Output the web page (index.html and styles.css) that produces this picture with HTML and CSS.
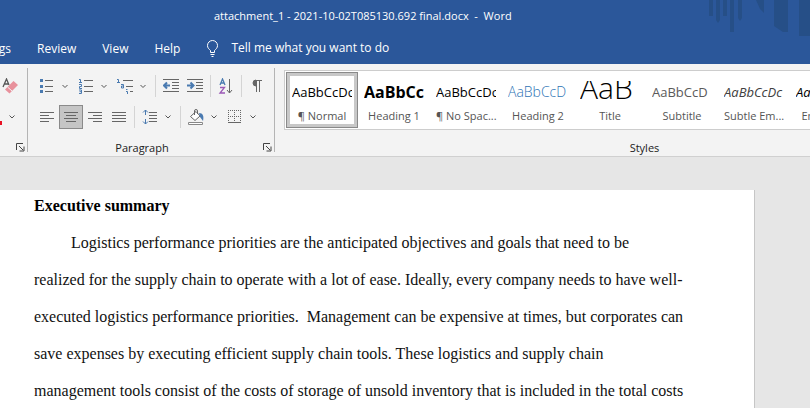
FILE: index.html
```html
<!DOCTYPE html>
<html lang="en">
<head>
    <meta charset="UTF-8">
    <meta name="viewport" content="width=device-width, initial-scale=1.0">
    <title>attachment_1 - Word</title>
    <link rel="stylesheet" href="styles.css">
</head>
<body>
    <header class="header">
        <svg class="header-art" width="102" height="37" viewBox="0 0 102 37" aria-hidden="true">
            <path d="M1 0h4v16h-4zM8 0h4v20l-2 3l-2-3zM15 0h4v16h-4zM22 0h4v32h-4zM30 0h4v18l-2 3l-2-3zM48 0h8v13l-4-4zM66 0h14v32h-5l-9-6zM91 0h11v36h-11z"/>
        </svg>
        <div class="title">attachment_1 - 2021-10-02T085130.692 final.docx&nbsp; -&nbsp; Word</div>
        <nav class="tabs">
            <a href="#" class="cut">Mailings</a>
            <a href="#">Review</a>
            <a href="#">View</a>
            <a href="#">Help</a>
            <a href="#" class="tell">
                <svg width="13" height="17" viewBox="0 0 13 17" aria-hidden="true">
                    <path d="M4.5 12.5v-2C3 9 1.5 8 1.5 5.5a5 5 0 0 1 10 0C11.5 8 10 9 8.500 10.500v2zM4.500 14.500h4M5.500 16.500h2" fill="none" stroke="#fff"/>
                </svg>
                Tell me what you want to do
            </a>
        </nav>
    </header>

    <div class="ribbon">
        <section class="group font-group" aria-label="Font">
            <div class="row">
                <button class="tool" aria-label="Clear formatting">
                    <svg width="16" height="16" viewBox="0 0 16 16">
                        <path d="M1 9L4.500 1L7 7M2.500 6h4" fill="none" stroke="#555" stroke-width="1.300"/>
                        <path d="M3 11.500L11.500 3L16 7L7.500 15.500z" fill="#e8919c"/>
                        <path d="M5.500 9l4.500 4" stroke="#f3f3f3"/>
                    </svg>
                </button>
            </div>
            <div class="row">
                <span class="font-color"></span>
                <button class="tool arrow" aria-label="Font color">
                    <svg width="8" height="8" viewBox="0 0 8 8"><path class="chev" d="M1.500 2.500L4 5L6.500 2.500"/></svg>
                </button>
            </div>
            <div class="label-row">
                <button class="launcher" aria-label="Font settings">
                    <svg width="9" height="9" viewBox="0 0 9 9"><path d="M.5 7V.5H7M3 3L7 7M8 3.500V8H3.500"/></svg>
                </button>
            </div>
        </section>

        <section class="group paragraph-group" aria-label="Paragraph">
            <div class="row">
                <button class="split" aria-label="Bullets">
                    <svg width="16" height="16" viewBox="0 0 16 16">
                        <path class="line" d="M6 2.500h8M6 8.500h8M6 13.500h8"/>
                        <path d="M1 1h3v3H1zM1 7h3v3H1zM1 12h3v3H1z" fill="#4a7ab0"/>
                    </svg>
                    <svg width="8" height="8" viewBox="0 0 8 8"><path class="chev" d="M1.500 3L4 5.500L6.500 3"/></svg>
                </button>
                <button class="split" aria-label="Numbering">
                    <svg width="16" height="16" viewBox="0 0 16 16">
                        <path class="line" d="M6 2.500h9M6 8.500h9M6 13.500h9"/>
                        <path class="blue" d="M1 1.500h1.500v3M1 4.500h3M1 6.500h2.500v2H1.500v2H4M1 12h2.500v3.500H1M1.500 13.700h2"/>
                    </svg>
                    <svg width="8" height="8" viewBox="0 0 8 8"><path class="chev" d="M1.500 3L4 5.500L6.500 3"/></svg>
                </button>
                <button class="split" aria-label="Multilevel list">
                    <svg width="16" height="16" viewBox="0 0 16 16">
                        <path class="line" d="M6 2.500h10M9 8.500h7M13 13.500h3"/>
                        <path class="blue" d="M0 1.500h1.500v3M0 4.500h3M4 6.500h2.500v3.500H4.500v-2h2M9 11.500h1.500M9 13.500h1.500v3"/>
                    </svg>
                    <svg width="8" height="8" viewBox="0 0 8 8"><path class="chev" d="M1.500 3L4 5.500L6.500 3"/></svg>
                </button>
                <span class="sep"></span>
                <button class="tool" aria-label="Decrease indent">
                    <svg width="16" height="16" viewBox="0 0 16 16">
                        <path class="line" d="M0 1.500h16M9 4.500h7M9 7.500h7M9 10.500h7M0 13.500h16"/>
                        <path class="arrow-blue" d="M7 7.500H1M4 4.500L1 7.500l3 3"/>
                    </svg>
                </button>
                <button class="tool" aria-label="Increase indent">
                    <svg width="16" height="16" viewBox="0 0 16 16">
                        <path class="line" d="M0 1.500h16M9 4.500h7M9 7.500h7M9 10.500h7M0 13.500h16"/>
                        <path class="arrow-blue" d="M0 7.500h6M3.500 4.500l3 3l-3 3"/>
                    </svg>
                </button>
                <span class="sep"></span>
                <button class="tool" aria-label="Sort">
                    <svg width="16" height="16" viewBox="0 0 16 16">
                        <path d="M2 7L4.500 1L7 7M3 5h3" fill="none" stroke="#4a7ab0" stroke-width="1.300"/>
                        <path d="M2 9.500h4.500L2 15h5" fill="none" stroke="#9b59b6" stroke-width="1.300"/>
                        <path class="line" d="M11.500 1v14M9 12l2.500 3l2.500-3"/>
                    </svg>
                </button>
                <span class="sep"></span>
                <button class="tool" aria-label="Show formatting marks">
                    <svg width="16" height="16" viewBox="0 0 16 16">
                        <path d="M7 2v6a3 3 0 0 1 0-6z" fill="#666" stroke="#666"/>
                        <path class="line" d="M6 2.500h7M7.500 2v12M10.500 2v12"/>
                    </svg>
                </button>
            </div>
            <div class="row">
                <button class="tool" aria-label="Align left">
                    <svg width="16" height="16" viewBox="0 0 16 16"><path class="line" d="M1 3.500h14M1 6.500h9M1 9.500h14M1 12.500h9"/></svg>
                </button>
                <button class="tool pressed" aria-label="Center" aria-pressed="true">
                    <svg width="16" height="16" viewBox="0 0 16 16"><path class="line" d="M1 3.500h14M3 6.500h10M1 9.500h14M3 12.500h10"/></svg>
                </button>
                <button class="tool" aria-label="Align right">
                    <svg width="16" height="16" viewBox="0 0 16 16"><path class="line" d="M1 3.500h14M6 6.500h9M1 9.500h14M6 12.500h9"/></svg>
                </button>
                <button class="tool" aria-label="Justify">
                    <svg width="16" height="16" viewBox="0 0 16 16"><path class="line" d="M1 3.500h14M1 6.500h14M1 9.500h14M1 12.500h14"/></svg>
                </button>
                <span class="sep"></span>
                <button class="split" aria-label="Line spacing">
                    <svg width="16" height="16" viewBox="0 0 16 16">
                        <path class="line" d="M7 3.500h8M7 6.500h8M7 9.500h8M7 12.500h8"/>
                        <path class="arrow-blue thin" d="M3.500 1v5M1 3.500L3.500 1L6 3.500M3.500 10v5M1 12.500L3.500 15L6 12.500"/>
                    </svg>
                    <svg width="8" height="8" viewBox="0 0 8 8"><path class="chev" d="M1.500 2.500L4 5L6.500 2.500"/></svg>
                </button>
                <span class="sep"></span>
                <button class="split" aria-label="Shading">
                    <svg width="16" height="16" viewBox="0 0 16 16">
                        <path d="M2.500 7.500L8 2.500L12 7L7 11.500z" fill="#fff" stroke="#666"/>
                        <path d="M6.500 6V2a1.500 1.500 0 0 1 3 0v3" fill="none" stroke="#666"/>
                        <path d="M11 4c4 0 5 3 4 8l-3-4z" fill="#4a7ab0"/>
                        <path d="M.5 13.500h14v2H.5z" fill="#fff" stroke="#888"/>
                    </svg>
                    <svg width="8" height="8" viewBox="0 0 8 8"><path class="chev" d="M1.500 2.500L4 5L6.500 2.500"/></svg>
                </button>
                <button class="split" aria-label="Borders">
                    <svg width="16" height="16" viewBox="0 0 16 16">
                        <path d="M1 1.500h13M1 7.500h13M1.500 1v12M7.500 1v12M13.500 1v12" fill="none" stroke="#666" stroke-dasharray="1 1"/>
                        <path class="line" d="M1 13.500h13"/>
                    </svg>
                    <svg width="8" height="8" viewBox="0 0 8 8"><path class="chev" d="M1.500 2.500L4 5L6.500 2.500"/></svg>
                </button>
            </div>
            <div class="label-row">
                <span>Paragraph</span>
                <button class="launcher" aria-label="Paragraph settings">
                    <svg width="9" height="9" viewBox="0 0 9 9"><path d="M.5 7V.5H7M3 3L7 7M8 3.500V8H3.500"/></svg>
                </button>
            </div>
        </section>

        <section class="group styles-group" aria-label="Styles">
            <div class="gallery">
                <button class="style selected"><span class="preview">AaBbCcDc</span><span class="name">¶ Normal</span></button>
                <button class="style"><span class="preview heading1">AaBbCc</span><span class="name">Heading 1</span></button>
                <button class="style"><span class="preview">AaBbCcDc</span><span class="name">¶ No Spac...</span></button>
                <button class="style"><span class="preview heading2">AaBbCcD</span><span class="name">Heading 2</span></button>
                <button class="style"><span class="preview big">AaB</span><span class="name">Title</span></button>
                <button class="style"><span class="preview subtitle">AaBbCcD</span><span class="name">Subtitle</span></button>
                <button class="style"><span class="preview subtle">AaBbCcDc</span><span class="name">Subtle Em...</span></button>
                <button class="style"><span class="preview emphasis">AaBbCcDc</span><span class="name">Emphasis</span></button>
            </div>
            <div class="label-row"><span>Styles</span></div>
        </section>
    </div>

    <main class="workspace">
        <article class="page">
            <h1>Executive summary</h1>
            <p>
                Logistics performance priorities are the anticipated objectives and goals that need to be<br>
                realized for the supply chain to operate with a lot of ease. Ideally, every company needs to have well-<br>
                executed logistics performance priorities.&nbsp; Management can be expensive at times, but corporates can<br>
                save expenses by executing efficient supply chain tools. These logistics and supply chain<br>
                management tools consist of the costs of storage of unsold inventory that is included in the total costs
            </p>
        </article>
    </main>
</body>
</html>
```
FILE: styles.css
```css
* {
    box-sizing: border-box;
}

body {
    margin: 0;
    min-height: 100vh;
    display: flex;
    flex-direction: column;
    overflow: hidden;
    background: #E6E6E6;
    font-family: "Open Sans", "Noto Sans", sans-serif;
    font-size: 11px;
    color: #222;
}

button {
    margin: 0;
    padding: 0;
    border: 0;
    background: none;
    font-family: inherit;
    font-size: 11px;
}

svg {
    display: block;
    flex: none;
}

/* title bar and tabs */
.header {
    position: relative;
    background: #2B579A;
    color: #FFF;
}

.header-art {
    position: absolute;
    top: 0;
    right: 0;
    fill: #264F87;
}

.title {
    padding-left: 214px;
    line-height: 32px;
    white-space: nowrap;
}

.tabs {
    display: flex;
    gap: 26px;
    height: 32px;
    line-height: 34px;
    font-size: 12px;
}

.tabs a {
    color: #FFF;
    text-decoration: none;
    white-space: nowrap;
}

.tabs .cut {
    display: flex;
    justify-content: flex-end;
    width: 11px;
    overflow: hidden;
}

.tabs .tell {
    display: flex;
    align-items: center;
    gap: 12px;
}

/* ribbon */
.ribbon {
    display: flex;
    overflow: hidden;
    padding: 4px 0;
    background: #F3F3F3;
    border-bottom: 1px solid #D0D0D0;
}

.group {
    flex: none;
    display: flex;
    flex-direction: column;
    padding-top: 6px;
    border-right: 1px solid #B4B4B4;
}

.font-group {
    width: 28px;
}

.paragraph-group {
    width: 247px;
}

.styles-group {
    width: 740px;
}

.row {
    display: flex;
    align-items: center;
    height: 24px;
    margin-bottom: 7px;
}

.paragraph-group .row {
    padding-left: 7px;
}

.tool {
    display: flex;
    align-items: center;
    justify-content: center;
    width: 24px;
    height: 24px;
}

.font-group .row .tool {
    width: 20px;
}

.pressed {
    background: #C5C5C5;
    border: 1px solid #8A8A8A;
}

.split {
    display: flex;
    align-items: center;
    gap: 6px;
    width: 39px;
    height: 24px;
    padding-left: 4px;
}

.sep {
    width: 1px;
    height: 22px;
    margin: 0 3px;
    background: #D4D4D4;
}

.font-color {
    width: 2px;
    height: 4px;
    margin-top: 12px;
    background: #E81123;
}

.line {
    fill: none;
    stroke: #666;
}

.blue {
    fill: none;
    stroke: #4A7AB0;
}

.arrow-blue {
    fill: none;
    stroke: #4A7AB0;
    stroke-width: 2;
}

.thin {
    stroke-width: 1;
}

.chev {
    fill: none;
    stroke: #555;
}

.label-row {
    position: relative;
    display: flex;
    align-items: flex-end;
    justify-content: center;
    height: 16px;
    line-height: 8px;
}

.paragraph-group .label-row {
    padding-right: 18px;
}

.launcher {
    position: absolute;
    right: 2px;
    bottom: 0;
}

.launcher path {
    fill: none;
    stroke: #444;
}

/* styles gallery */
.gallery {
    display: flex;
    height: 60px;
    margin: -4px 9px 6px;
    padding: 1px;
    background: #FFF;
    border: 1px solid #CDCDCD;
}

.style {
    flex: none;
    width: 72px;
    height: 56px;
    padding: 7px 6px 0;
    text-align: left;
}

.selected {
    outline: 1px solid #8A8A8A;
    outline-offset: -1px;
    box-shadow: inset 0 0 0 4px #C8C8C8;
}

.preview {
    display: block;
    height: 24px;
    line-height: 22px;
    overflow: hidden;
    white-space: nowrap;
    font-size: 13px;
    color: #000;
}

.heading1 {
    font-size: 16px;
    font-weight: 700;
}

.heading2 {
    font-size: 14px;
    font-weight: 300;
    color: #2E74B5;
}

.big {
    line-height: 14px;
    font-size: 30px;
    font-weight: 300;
}

.subtitle {
    color: #5A5A5A;
}

.subtle {
    font-style: italic;
    color: #404040;
}

.emphasis {
    font-style: italic;
}

.name {
    display: block;
    line-height: 22px;
    text-align: center;
    white-space: nowrap;
    color: #555;
}

/* document */
.workspace {
    flex: 1;
    display: flex;
    padding: 33px 56px 0 0;
}

.page {
    flex: 1;
    padding-left: 34px;
    background: #FFF;
    box-shadow: 1px 0 0 #C6C6C6;
    font-family: "Liberation Serif", "Times New Roman", serif;
    font-size: 16px;
    color: #111;
    white-space: nowrap;
}

h1 {
    margin: 0 0 2px;
    font-size: 16px;
    line-height: 32px;
    color: #000;
}

p {
    margin: 0;
    line-height: 37px;
    text-indent: 37px;
}
```
